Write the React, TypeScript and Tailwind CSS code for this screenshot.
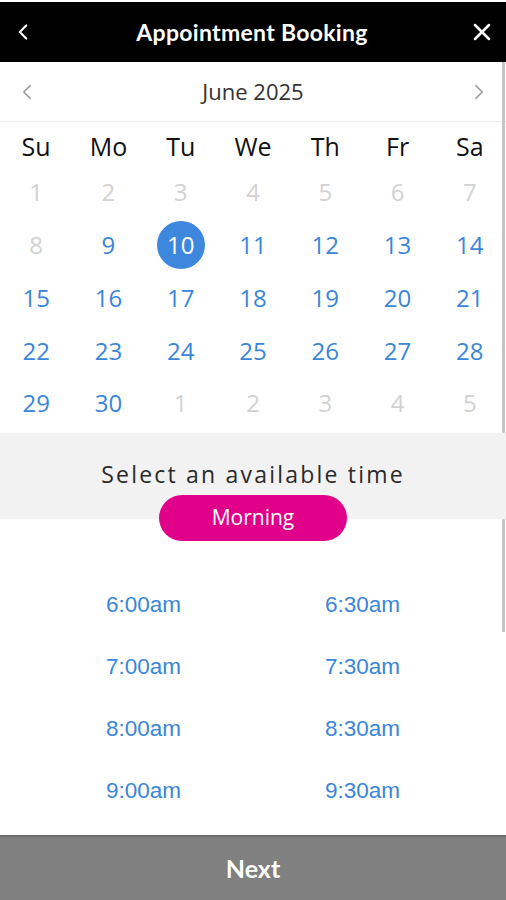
import { ChevronLeft, ChevronRight, X } from "lucide-react"

const days = ["Su", "Mo", "Tu", "We", "Th", "Fr", "Sa"]

const weeks: { d: number; on: boolean }[][] = [
  [1, 2, 3, 4, 5, 6, 7].map((d) => ({ d, on: false })),
  [8, 9, 10, 11, 12, 13, 14].map((d) => ({ d, on: d !== 8 })),
  [15, 16, 17, 18, 19, 20, 21].map((d) => ({ d, on: true })),
  [22, 23, 24, 25, 26, 27, 28].map((d) => ({ d, on: true })),
  [
    { d: 29, on: true },
    { d: 30, on: true },
    { d: 1, on: false },
    { d: 2, on: false },
    { d: 3, on: false },
    { d: 4, on: false },
    { d: 5, on: false },
  ],
]

const times = [
  ["6:00am", "6:30am"],
  ["7:00am", "7:30am"],
  ["8:00am", "8:30am"],
  ["9:00am", "9:30am"],
]

export default function App() {
  return (
    <div className="h-[900px] w-[506px] flex flex-col bg-white overflow-hidden font-['Open_Sans',sans-serif]">
      <header className="mt-[2px] h-[60px] bg-black flex items-center justify-between px-[10px] text-white">
        <ChevronLeft className="w-[26px] h-[26px]" strokeWidth={2} />
        <h1 className="text-[23px] font-bold font-['Lato',sans-serif] tracking-[0.3px]">Appointment Booking</h1>
        <X className="w-[28px] h-[28px]" strokeWidth={2.2} />
      </header>

      <div className="relative flex-1 min-h-0">
        {/* scrollbar */}
        <div className="absolute right-[1px] top-0 h-[570px] w-[3px] bg-[#c4c4c4]" />

        <main className="flex flex-col">
          <div className="h-[60px] flex items-center justify-between px-[14px] border-b border-[#ececec]">
            <ChevronLeft className="w-[26px] h-[26px] text-[#9a9a9a]" strokeWidth={1.5} />
            <span className="text-[22px] text-[#333]">June 2025</span>
            <ChevronRight className="w-[26px] h-[26px] text-[#9a9a9a]" strokeWidth={1.5} />
          </div>

          <div className="grid grid-cols-7 h-[44px] pt-[5px] items-center text-center text-[25px] text-[#111]">
            {days.map((d) => (
              <span key={d}>{d}</span>
            ))}
          </div>

          <div className="flex flex-col pb-[3px]">
            {weeks.map((w, i) => (
              <div key={i} className="grid grid-cols-7 h-[52.75px] items-center text-center text-[24px]">
                {w.map((c, j) =>
                  c.on && c.d === 10 && i === 1 ? (
                    <span key={j} className="flex justify-center">
                      <span className="w-[48px] h-[48px] rounded-full bg-[#3d87de] text-white flex items-center justify-center">10</span>
                    </span>
                  ) : (
                    <span key={j} className={c.on ? "text-[#3a86d8]" : "text-[#d2d2d2]"}>
                      {c.d}
                    </span>
                  )
                )}
              </div>
            ))}
          </div>

          <div className="relative bg-[#f2f2f2] h-[86px] flex flex-col items-center pt-[25px]">
            <span className="text-[23px] text-[#2a2a2a] tracking-[2.2px] leading-[32px]">Select an available time</span>
            <span className="absolute top-[62px] w-[188px] h-[46px] rounded-full bg-[#e0008a] text-white text-[21px] flex items-center justify-center">
              Morning
            </span>
          </div>

          <div className="pt-[69px] flex flex-col">
            {times.map((r) => (
              <div key={r[0]} className="grid grid-cols-2 h-[62px] text-[22.5px] text-[#3a86d8] font-['Liberation_Sans',sans-serif]">
                <span className="pl-[106px]">{r[0]}</span>
                <span className="pl-[72px]">{r[1]}</span>
              </div>
            ))}
          </div>
        </main>
      </div>

      <button className="h-[65px] bg-[#808080] border-t-2 border-[#6e6e6e] text-white text-[25px] font-bold font-['Lato',sans-serif]">
        Next
      </button>
    </div>
  )
}
